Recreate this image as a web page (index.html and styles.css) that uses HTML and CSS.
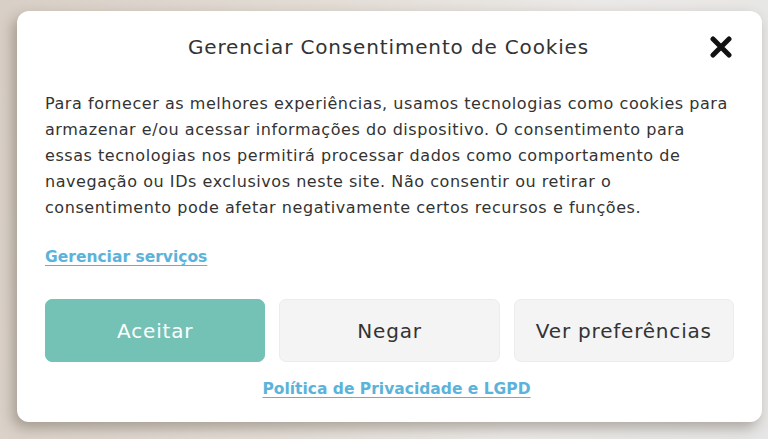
FILE: index.html
```html
<!DOCTYPE html>
<html lang="pt-BR">
  <head>
    <meta charset="UTF-8" />
    <meta name="viewport" content="width=device-width, initial-scale=1.0" />
    <title>Cookies</title>
    <link rel="stylesheet" href="styles.css">
  </head>
  <body>
    <div class="banner">
      <div class="header">
        <h2 class="title">Gerenciar Consentimento de Cookies</h2>
        <button class="close" aria-label="Fechar">
          <svg width="22" height="22" viewBox="0 0 22 22">
            <path d="M3 3 L19 19 M19 3 L3 19" stroke="#111" stroke-width="5" stroke-linecap="round" />
          </svg>
        </button>
      </div>

      <p class="message">
        Para fornecer as melhores experiências, usamos tecnologias como cookies para
        armazenar e/ou acessar informações do dispositivo. O consentimento para
        essas tecnologias nos permitirá processar dados como comportamento de
        navegação ou IDs exclusivos neste site. Não consentir ou retirar o
        consentimento pode afetar negativamente certos recursos e funções.
      </p>

      <a class="link manage" href="#">Gerenciar serviços</a>

      <div class="buttons">
        <button class="btn accept">Aceitar</button>
        <button class="btn">Negar</button>
        <button class="btn">Ver preferências</button>
      </div>

      <div class="footer">
        <a class="link" href="#">Política de Privacidade e LGPD</a>
      </div>
    </div>
  </body>
</html>
```

FILE: styles.css
```css
* {
  margin: 0;
  padding: 0;
  box-sizing: border-box;
}

body {
  height: 439px;
  overflow: hidden;
  padding: 11px 0 0 17px;
  font-family: "DejaVu Sans", sans-serif;
  color: #333;
  background: linear-gradient(100deg, #d8cfc6 0%, #e3ddd6 40%, #ebe9e7 70%, #e6e6e6 100%);
}

.banner {
  width: 745px;
  height: 411px;
  background-color: #fff;
  border-radius: 12px;
  padding: 24px 28px 0 28px;
  box-shadow: -4px 6px 14px rgba(60, 45, 30, 0.35);
}

.header {
  display: flex;
  align-items: center;
  height: 24px;
}

.title {
  flex: 1;
  text-align: center;
  font-size: 20px;
  font-weight: 400;
  letter-spacing: 0.85px;
  line-height: 24px;
  padding-left: 30px;
  color: #333;
}

.close {
  border: none;
  background: none;
  width: 30px;
  height: 24px;
  display: flex;
  align-items: center;
  justify-content: flex-end;
  margin-right: 2px;
}

.message {
  margin-top: 32px;
  font-size: 16px;
  letter-spacing: 0.55px;
  line-height: 26px;
}

.link {
  color: #5bb3da;
  font-weight: 600;
  font-size: 15.5px;
  text-decoration: underline;
  text-underline-offset: 3px;
}

.manage {
  display: inline-block;
  margin-top: 23px;
  line-height: 26px;
}

.buttons {
  display: flex;
  gap: 14px;
  margin-top: 29px;
}

.btn {
  flex: 1;
  height: 63px;
  border-radius: 7px;
  border: 1px solid #ececec;
  background-color: #f4f4f4;
  color: #333;
  font-family: "DejaVu Sans", sans-serif;
  font-size: 20px;
  letter-spacing: 0.8px;
}

.accept {
  background-color: #74c2b5;
  border-color: #74c2b5;
  color: #fff;
}

.footer {
  text-align: center;
  margin-top: 14px;
  padding-left: 14px;
  line-height: 26px;
}
```
